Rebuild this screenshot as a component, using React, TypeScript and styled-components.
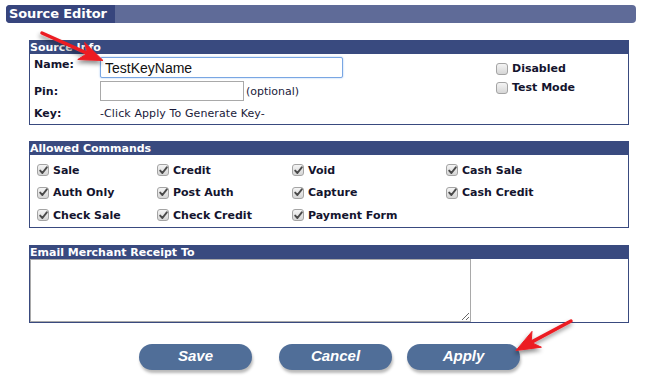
import React from "react";
import styled, { createGlobalStyle } from "styled-components";

const Global = createGlobalStyle`
  html, body { margin: 0; padding: 0; background: #ffffff; }
  body { font-family: "DejaVu Sans", Verdana, sans-serif; font-size: 11px; color: #1a1a3a; }
  * { box-sizing: border-box; }
`;

const NAVY = "#394a7f";

const Page = styled.div`
  position: relative;
  width: 648px;
  height: 386px;
  padding-top: 5px;
  overflow: hidden;
`;

const TitleBar = styled.div`
  margin-left: 6px;
  width: 630px;
  height: 18px;
  background: #5f6b98;
  border-radius: 4px;
  display: flex;
  overflow: hidden;
`;

const TitleTab = styled.div`
  width: 109px;
  background: #37457d;
  color: #ffffff;
  font-weight: bold;
  font-size: 13px;
  line-height: 18px;
  padding-left: 3px;
  white-space: nowrap;
  letter-spacing: -0.1px;
`;

const Panel = styled.section<{ $mt: number }>`
  margin-left: 29px;
  margin-top: ${(p) => p.$mt}px;
  width: 600px;
  border: 1px solid ${NAVY};
`;

const PanelHeader = styled.div`
  height: 13px;
  background: ${NAVY};
  color: #ffffff;
  font-weight: bold;
  font-size: 11px;
  line-height: 13px;
  white-space: nowrap;
`;

const InfoBody = styled.div`
  height: 70px;
  display: flex;
`;

const InfoGrid = styled.div`
  width: 466px;
  padding: 3px 0 0 4px;
  display: flex;
  flex-direction: column;
`;

const InfoRow = styled.div<{ $h: number; $align: string }>`
  height: ${(p) => p.$h}px;
  display: flex;
  align-items: ${(p) => p.$align};
`;

const Label = styled.div<{ $mt?: number }>`
  width: 66px;
  font-weight: bold;
  color: #14142e;
  margin-top: ${(p) => p.$mt ?? 0}px;
`;

const TextInput = styled.input<{ $w: number; $focus?: boolean }>`
  width: ${(p) => p.$w}px;
  height: ${(p) => (p.$focus ? 21 : 20)}px;
  border: 1px solid ${(p) => (p.$focus ? "#79a6e3" : "#a9a9a9")};
  box-shadow: ${(p) => (p.$focus ? "0 0 2px #9cc0f0" : "none")};
  border-radius: ${(p) => (p.$focus ? 2 : 0)}px;
  padding: 0 4px;
  font-family: "Liberation Sans", Arial, sans-serif;
  font-size: 14px;
  color: #111;
  outline: none;
  background: #fff;
`;

const Hint = styled.span`
  margin-left: 2px;
  color: #1a1a3a;
  font-size: 11px;
`;

const KeyText = styled.span`
  color: #1a1a3a;
  font-size: 11px;
  letter-spacing: 0.1px;
`;

const FlagColumn = styled.div`
  padding-top: 5px;
  display: flex;
  flex-direction: column;
`;

const CheckRow = styled.label`
  height: 19px;
  display: flex;
  align-items: center;
  font-weight: bold;
  color: #14142e;
  white-space: nowrap;
`;

const Box = styled.span`
  width: 12px;
  height: 12px;
  margin-right: 4px;
  border: 1px solid #a4a4a4;
  border-radius: 3px;
  background: linear-gradient(#f4f4f4, #d6d6d6);
  display: inline-flex;
  align-items: center;
  justify-content: center;
  flex: none;
`;

const CommandGrid = styled.div`
  min-height: 71px;
  padding: 4px 0 0 7px;
  display: grid;
  grid-template-columns: 120px 135px 154px 1fr;
  grid-auto-rows: 22.5px;
`;

const CommandItem = styled.label`
  display: flex;
  align-items: center;
  font-weight: bold;
  color: #14142e;
  white-space: nowrap;
`;

const EmailBody = styled.div`
  height: 63px;
  display: flex;
`;

const EmailArea = styled.textarea`
  width: 441px;
  height: 63px;
  border: 1px solid #a9a9a9;
  margin: 0;
  padding: 2px;
  font-family: "Liberation Sans", Arial, sans-serif;
  font-size: 13px;
  outline: none;
  resize: both;
`;

const ButtonRow = styled.div`
  margin-top: 21px;
  padding-left: 139px;
  display: flex;
`;

const ActionButton = styled.button<{ $ml: number }>`
  margin-left: ${(p) => p.$ml}px;
  width: 113px;
  height: 26px;
  border: none;
  border-radius: 13px;
  background: #506e98;
  color: #ffffff;
  font-family: "Liberation Sans", Arial, sans-serif;
  font-style: italic;
  font-weight: bold;
  font-size: 15px;
  line-height: 24px;
  box-shadow: 1px 3px 3px rgba(0, 0, 0, 0.28);
  padding: 0 0 2px 0;
  cursor: pointer;
`;

const Overlay = styled.svg`
  position: absolute;
  left: 0;
  top: 0;
  pointer-events: none;
`;

const Check = () => (
  <svg width="9" height="9" viewBox="0 0 9 9">
    <path d="M1.2 4.6 L3.4 7 L7.8 1.3" fill="none" stroke="#4a4a4a" strokeWidth="1.9" strokeLinecap="round" strokeLinejoin="round" />
  </svg>
);

const commands = [
  "Sale", "Credit", "Void", "Cash Sale",
  "Auth Only", "Post Auth", "Capture", "Cash Credit",
  "Check Sale", "Check Credit", "Payment Form", "",
];

export default function App() {
  return (
    <Page>
      <Global />
      <TitleBar>
        <TitleTab>Source Editor</TitleTab>
      </TitleBar>

      <Panel $mt={17}>
        <PanelHeader>Source Info</PanelHeader>
        <InfoBody>
          <InfoGrid>
            <InfoRow $h={24} $align="flex-start">
              <Label $mt={1}>Name:</Label>
              <TextInput $w={243} $focus defaultValue="TestKeyName" />
            </InfoRow>
            <InfoRow $h={22} $align="center">
              <Label>Pin:</Label>
              <TextInput $w={144} />
              <Hint>(optional)</Hint>
            </InfoRow>
            <InfoRow $h={22} $align="center">
              <Label>Key:</Label>
              <KeyText>-Click Apply To Generate Key-</KeyText>
            </InfoRow>
          </InfoGrid>
          <FlagColumn>
            <CheckRow><Box />Disabled</CheckRow>
            <CheckRow><Box />Test Mode</CheckRow>
          </FlagColumn>
        </InfoBody>
      </Panel>

      <Panel $mt={16}>
        <PanelHeader>Allowed Commands</PanelHeader>
        <CommandGrid>
          {commands.map((c, i) =>
            c ? (
              <CommandItem key={i}>
                <Box><Check /></Box>
                {c}
              </CommandItem>
            ) : (
              <span key={i} />
            )
          )}
        </CommandGrid>
      </Panel>

      <Panel $mt={17}>
        <PanelHeader>Email Merchant Receipt To</PanelHeader>
        <EmailBody>
          <EmailArea />
        </EmailBody>
      </Panel>

      <ButtonRow>
        <ActionButton $ml={0}>Save</ActionButton>
        <ActionButton $ml={27}>Cancel</ActionButton>
        <ActionButton $ml={15}>Apply</ActionButton>
      </ButtonRow>

      <Overlay width="648" height="386" viewBox="0 0 648 386">
        <defs>
          <filter id="ash" x="-30%" y="-30%" width="160%" height="160%">
            <feDropShadow dx="-1" dy="3" stdDeviation="2" floodColor="#000" floodOpacity="0.45" />
          </filter>
        </defs>
        <g filter="url(#ash)" fill="#ec1c24" stroke="#ec1c24">
          <line x1="42" y1="33" x2="88" y2="53.6" strokeWidth="3.5" strokeLinecap="round" />
          <path d="M103 60.5 L77.8 59.5 L87.4 53.4 L84.6 42.4 Z" strokeWidth="1" strokeLinejoin="round" />
          <line x1="571" y1="321" x2="531" y2="342.4" strokeWidth="3.5" strokeLinecap="round" />
          <path d="M516 350.5 L532 331.4 L531.1 342.4 L541.4 347.2 Z" strokeWidth="1" strokeLinejoin="round" />
        </g>
      </Overlay>
    </Page>
  );
}
